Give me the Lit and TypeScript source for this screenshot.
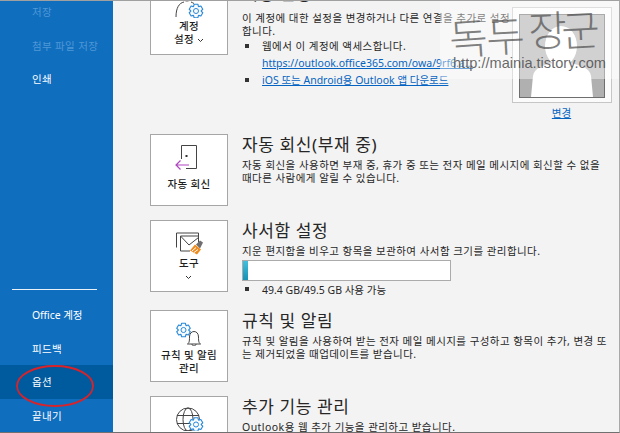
import { LitElement, html, css, svg } from "lit";
import { customElement } from "lit/decorators.js";

function gearPath(cx: number, cy: number, r: number) {
  const pts: string[] = [];
  const n = 6;
  for (let i = 0; i < n; i++) {
    const a = (i / n) * Math.PI * 2 - Math.PI / 2;
    const w = 0.27;
    const p = (ang: number, rad: number) =>
      `${(cx + Math.cos(ang) * rad).toFixed(2)} ${(cy + Math.sin(ang) * rad).toFixed(2)}`;
    pts.push(`${i === 0 ? "M" : "L"}${p(a - w, r)}`, `L${p(a + w, r)}`, `L${p(a + w + 0.22, r * 0.74)}`, `L${p(a + Math.PI / n, r * 0.74)}`, `L${p(a + (2 * Math.PI) / n - w - 0.22, r * 0.74)}`);
  }
  return pts.join(" ") + " Z";
}
const gear = (cx: number, cy: number, r: number) => svg`
  <path d=${gearPath(cx, cy, r)} fill="#f8fbfe" stroke="#2a88d8" stroke-width="1.1" stroke-linejoin="round"/>
  <circle cx=${cx} cy=${cy} r=${r * 0.36} fill="none" stroke="#2a88d8" stroke-width="1"/>`;

const personIcon = html`<svg class="ico" width="32" height="26" viewBox="0 4 32 26">
  <circle cx="14" cy="6" r="7" fill="none" stroke="#444" stroke-width="1"/>
  <path d="M3 29 C3 20 6 15 11 14 M18 14 C19 14.300 20 15 21 15.500" fill="none" stroke="#444" stroke-width="1"/>
  ${gear(23, 23, 7)}
</svg>`;
const doorIcon = html`<svg class="ico" width="32" height="26" viewBox="3 3 32 26">
  <path d="M11.500 17 V3.500 H26.500 V26.500 H16" fill="none" stroke="#444" stroke-width="1"/>
  <rect x="15.500" y="13" width="2" height="2" fill="#333"/>
  <path d="M19 23 H6 M10.500 18.500 L6 23 L10.500 27.500" fill="none" stroke="#b146c2" stroke-width="1.200"/>
</svg>`;
const mailIcon = html`<svg class="ico" width="32" height="26" viewBox="0 -1.500 32 26">
  <path d="M3.500 17 V2.500 H25.500 V6" fill="none" stroke="#444" stroke-width="1"/>
  <path d="M7.500 5.500 H25.500 V12 M7.500 5.500 V20.500 H17 M7.500 5.500 L16 14.500 L25.500 7" fill="none" stroke="#444" stroke-width="1"/>
  <path d="M17 20 L22 14 L28 19 L24 24 Z" fill="#ed8b1f"/>
  <path d="M19 20.500 L23 17 M21 22 L25 19" stroke="#fff" stroke-width="1"/>
  <path d="M23 14 L27 10 L30 12 L27 18 Z" fill="#6e6e6e"/>
</svg>`;
const bellIcon = html`<svg class="ico" width="32" height="26" viewBox="0 0 32 26">
  ${gear(10.5, 10, 7)}
  <path d="M14.500 24 C16 23 16.500 22 16.500 17 C16.500 13.500 18.500 11.500 21 11.500 C23.500 11.500 25.500 13.500 25.500 17 C25.500 22 26 23 27.500 24 Z M19 24 C19 26.500 23 26.500 23 24" fill="none" stroke="#444" stroke-width="1"/>
</svg>`;
const globeIcon = html`<svg class="ico" width="32" height="26" viewBox="-1 0.500 32 26">
  <circle cx="14" cy="15" r="11.500" fill="none" stroke="#444" stroke-width="1"/>
  <ellipse cx="14" cy="15" rx="5" ry="11.500" fill="none" stroke="#444" stroke-width="1"/>
  <path d="M3 11 H25 M3 19 H25" stroke="#444" stroke-width="1"/>
  ${gear(22, 20, 7)}
</svg>`;
const chev = html`<svg class="chev" width="7" height="5" viewBox="0 0 7 5"><path d="M1 1 L3.500 3.500 L6 1" fill="none" stroke="#333" stroke-width="1"/></svg>`;

@customElement("app-root")
export class AppRoot extends LitElement {
  static styles = css`
    :host {
      display: block; position: relative; width: 620px; height: 433px; overflow: hidden; box-sizing: border-box;
      background: #f3f3f3; color: #262626;
      font-family: "Noto Sans", "Noto Sans CJK KR", sans-serif;
      font-size: 10.5px; line-height: 13px;
      border-top: 1px solid #a0a0a0; border-right: 1px solid #a8a8a8; border-bottom: 1px solid #707070;
    }
    .shell { display: flex; height: 100%; }
    .side {
      width: 113px; flex: none; background: #106ebe; color: #fff; display: flex; flex-direction: column;
      font-size: 10.5px; letter-spacing: 0.35px;
    }
    .side .top { margin-top: -6px; }
    .side .item { height: 33.5px; box-sizing: border-box; display: flex; align-items: center; padding: 2px 0 0 32px; }
    .side .ghost { color: #4f97d6; }
    .side .bottom { margin-top: auto; }
    .side hr { border: 0; height: 1px; background: #e8f1fa; margin: 0 16px 8px 12px; }
    .side .sel { background: #005a9e; }
    .side .lat { letter-spacing: -0.1px; }
    .main { flex: 1; min-width: 0; display: flex; flex-direction: column; gap: 14px; padding: 0 0 0 37px; margin-top: -18px; }
    .row { display: flex; gap: 14px; flex: none; height: 72px; }
    .row.first { height: 137px; }
    .row.mid { height: 76px; }
    .tile {
      width: 78px; height: 72px; box-sizing: border-box; flex: none; background: #fff; border: 1px solid #a6a6a6;
      display: flex; flex-direction: column; align-items: center; text-align: center; padding-top: 8px;
      font-size: 10.5px; line-height: 13px; letter-spacing: 0.3px; color: #1f1f1f; font-weight: 500;
    }
    .ico { display: block; margin-bottom: 2px; flex: none; }
    .tile.one { padding-top: 10px; }
    .tile.one .ico { margin-bottom: 7px; }
    .tile.low { padding-top: 9px; }
    .tile.low .ico { margin-bottom: 3px; }
    .chev { display: inline-block; vertical-align: middle; }
    .body { flex: 1; min-width: 0; }
    h2 { margin: 0 0 3px; font-size: 17px; line-height: 22px; font-weight: 400; letter-spacing: 0.6px; color: #262626; }
    .first h2 { margin-bottom: 7px; }
    p { margin: 0; letter-spacing: 0.45px; white-space: nowrap; }
    ul { list-style: none; margin: 0; padding: 0; }
    li { position: relative; padding-left: 20px; white-space: nowrap; letter-spacing: 0.45px; line-height: 17px; }
    li::before { content: ""; position: absolute; left: 3px; top: 6px; width: 4px; height: 4px; background: #333; }
    a { color: #0563c1; text-decoration: underline; }
    li a { letter-spacing: 0; }
    .bar { width: 209px; height: 21px; box-sizing: border-box; margin: 2px 0 2px; background: #fff; border: 1px solid #ababab; display: flex; }
    .bar i { display: block; width: 5px; background: linear-gradient(#41bfdc, #1693b5); }
    .usage li { line-height: 14px; letter-spacing: 0; }
    .usage li::before { top: 4px; }
    .acct { flex: none; width: 101px; margin: 24px 7px 0 0; display: flex; flex-direction: column; align-items: center; gap: 4px; }
    .frame { width: 100px; height: 96px; box-sizing: border-box; border: 1px solid #c6c6c6; padding: 6px; background: #fbfbfb; }
    .frame svg { display: block; }
    .wash { position: absolute; left: 440px; top: -1px; width: 180px; height: 79px; background: rgba(255, 255, 255, 0.42); pointer-events: none; }
    .wm1 {
      position: absolute; left: 449px; top: 4px; font-size: 42px; line-height: 50px; white-space: nowrap; font-family: "Noto Sans CJK KR", sans-serif;
      font-weight: 300; color: rgba(80, 80, 80, 0.72); pointer-events: none; display: flex;
    }
    .wm1 span { display: block; }
    .wm1 .a { transform: translateY(6px) rotate(-4deg); }
    .wm1 .b { transform: translate(-2px, 4px) rotate(-3deg); }
    .wm1 .c { transform: translate(2px, -2px) rotate(-2deg); }
    .wm1 .d { transform: translate(-4px, -2px) rotate(-3deg); }
    .wm2 {
      position: absolute; left: 453px; top: 52px; font-size: 14.6px; line-height: 20px; white-space: nowrap; font-family: "Liberation Sans", sans-serif;
      color: rgba(70, 70, 70, 0.82); pointer-events: none;
    }
    .circle { position: absolute; left: 16px; top: 364px; pointer-events: none; }
  `;

  render() {
    return html`
      <div class="shell">
        <nav class="side">
          <div class="top">
            <div class="item ghost">저장</div>
            <div class="item ghost">첨부 파일 저장</div>
            <div class="item">인쇄</div>
          </div>
          <div class="bottom">
            <hr />
            <div class="item lat">Office 계정</div>
            <div class="item">피드백</div>
            <div class="item sel">옵션</div>
            <div class="item">끝내기</div>
          </div>
        </nav>
        <main class="main">
          <section class="row first">
            <div class="tile">${personIcon}<span>계정<br />설정 ${chev}</span></div>
            <div class="body">
              <h2>계정 설정</h2>
              <p>이 계정에 대한 설정을 변경하거나 다른 연결을 추가로 설정<br />합니다.</p>
              <ul>
                <li>웹에서 이 계정에 액세스합니다.<br /><a href="#">https://outlook.office365.com/owa/9rf6.a...</a></li>
                <li><a href="#">iOS 또는 Android용 Outlook 앱 다운로드</a></li>
              </ul>
            </div>
            <div class="acct">
              <div class="frame">
                <svg width="86" height="84" viewBox="0 0 86 84">
                  <rect x="0.500" y="0.500" width="85" height="83" fill="#b0b0b0" stroke="#6e6e6e"/>
                  <ellipse cx="42" cy="32" rx="16" ry="20" fill="#fff"/>
                  <path d="M12 83 L14 62 C15 54 24 51 34 49 H50 C62 51 71 54 72 62 L74 83 Z" fill="#fff"/>
                </svg>
              </div>
              <a href="#">변경</a>
            </div>
          </section>
          <section class="row">
            <div class="tile one">${doorIcon}<span>자동 회신</span></div>
            <div class="body">
              <h2>자동 회신(부재 중)</h2>
              <p>자동 회신을 사용하면 부재 중, 휴가 중 또는 전자 메일 메시지에 회신할 수 없을<br />때다른 사람에게 알릴 수 있습니다.</p>
            </div>
          </section>
          <section class="row mid">
            <div class="tile">${mailIcon}<span>도구<br />${chev}</span></div>
            <div class="body">
              <h2>사서함 설정</h2>
              <p>지운 편지함을 비우고 항목을 보관하여 사서함 크기를 관리합니다.</p>
              <div class="bar"><i></i></div>
              <ul class="usage"><li>49.4 GB/49.5 GB 사용 가능</li></ul>
            </div>
          </section>
          <section class="row">
            <div class="tile low">${bellIcon}<span>규칙 및 알림<br />관리</span></div>
            <div class="body">
              <h2>규칙 및 알림</h2>
              <p>규칙 및 알림을 사용하여 받는 전자 메일 메시지를 구성하고 항목이 추가, 변경 또<br />는 제거되었을 때업데이트를 받습니다.</p>
            </div>
          </section>
          <section class="row">
            <div class="tile">${globeIcon}<span>추가 기능<br />관리</span></div>
            <div class="body">
              <h2>추가 기능 관리</h2>
              <p>Outlook용 웹 추가 기능을 관리하고 받습니다.</p>
            </div>
          </section>
        </main>
      </div>
      <div class="wash"></div>
      <div class="wm1"><span class="a">독</span><span class="b">두</span><span class="c">장</span><span class="d">군</span></div>
      <div class="wm2">http://mainia.tistory.com</div>
      <svg class="circle" width="80" height="44" viewBox="0 0 80 44">
        <ellipse cx="39" cy="21" rx="38" ry="20" fill="none" stroke="#d8232a" stroke-width="1.800"/>
      </svg>
    `;
  }
}
